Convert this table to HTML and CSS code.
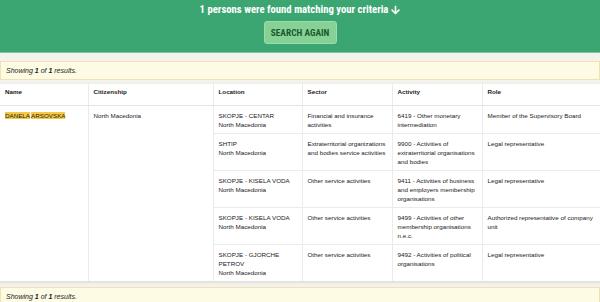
FILE: index.html
```html
<!DOCTYPE html>
<html lang="en">
<head>
<meta charset="utf-8">
<title>Search results</title>
<link rel="stylesheet" href="styles.css">
</head>
<body>
<header class="hero">
  <h1 class="hero-title">1 persons were found matching your criteria <svg class="arrow" viewBox="0 0 448 512" aria-hidden="true"><path d="M413.1 222.5l22.2 22.2c9.4 9.4 9.4 24.6 0 33.9L241 473c-9.4 9.4-24.6 9.4-33.9 0L12.7 278.6c-9.4-9.4-9.4-24.6 0-33.9l22.2-22.2c9.5-9.5 25-9.3 34.3.4L184 343.4V56c0-13.3 10.7-24 24-24h32c13.3 0 24 10.7 24 24v287.4l114.8-120.5c9.3-9.8 24.8-10 34.3-.4z"/></svg></h1>
  <button class="btn-again" type="button">SEARCH AGAIN</button>
</header>
<main class="results">
  <div class="alert">Showing <b>1</b> of <b>1</b> results.</div>
  <table class="grid">
    <colgroup>
      <col class="c-name"><col class="c-cit"><col class="c-loc"><col class="c-sec"><col class="c-act"><col class="c-role">
    </colgroup>
    <thead>
      <tr><th>Name</th><th>Citizenship</th><th>Location</th><th>Sector</th><th>Activity</th><th>Role</th></tr>
    </thead>
    <tbody>
      <tr>
        <td rowspan="5"><mark class="hl">DANELA</mark> <mark class="hl">ARSOVSKA</mark></td>
        <td rowspan="5">North Macedonia</td>
        <td>SKOPJE - CENTAR<br>North Macedonia</td>
        <td>Financial and insurance activities</td>
        <td>6419 - Other monetary intermediation</td>
        <td>Member of the Supervisory Board</td>
      </tr>
      <tr class="sep">
        <td>SHTIP<br>North Macedonia</td>
        <td>Extraterritorial organizations and bodies service activities</td>
        <td>9900 - Activities of extraterritorial organisations and bodies</td>
        <td>Legal representative</td>
      </tr>
      <tr class="sep">
        <td>SKOPJE - KISELA VODA<br>North Macedonia</td>
        <td>Other service activities</td>
        <td>9411 - Activities of business and employers membership organisations</td>
        <td>Legal representative</td>
      </tr>
      <tr class="sep">
        <td>SKOPJE - KISELA VODA<br>North Macedonia</td>
        <td>Other service activities</td>
        <td>9499 - Activities of other membership organisations n.e.c.</td>
        <td>Authorized representative of company unit</td>
      </tr>
      <tr class="sep">
        <td>SKOPJE - GJORCHE PETROV<br>North Macedonia</td>
        <td>Other service activities</td>
        <td>9492 - Activities of political organisations</td>
        <td>Legal representative</td>
      </tr>
    </tbody>
  </table>
  <div class="alert alert-bottom">Showing <b>1</b> of <b>1</b> results.</div>
</main>
</body>
</html>
```
FILE: styles.css
```css
html, body {
  margin: 0;
  padding: 0;
}
body {
  background: #f4f2ed;
  font-family: "Liberation Sans", Arial, sans-serif;
  color: #222;
}
.hero {
  background: #3ca672;
  border-bottom: 1px solid #7cc79e;
  box-sizing: border-box;
  height: 53px;
  display: flex;
  flex-direction: column;
  align-items: center;
  padding-top: 3px;
}
.hero-title {
  margin: 0;
  font-family: "Roboto Condensed", Roboto, sans-serif;
  font-stretch: condensed;
  font-weight: 700;
  font-size: 10.7px;
  line-height: 13px;
  color: #fff;
  display: flex;
  align-items: center;
  gap: 3px;
}
.arrow {
  width: 9px;
  height: 10px;
  fill: #fff;
}
.btn-again {
  margin-top: 5px;
  width: 73px;
  height: 23px;
  padding: 0;
  border: 1px solid #9adda8;
  border-radius: 3px;
  background: #86d196;
  color: #1b5a2e;
  font-family: "Roboto Condensed", Roboto, sans-serif;
  font-stretch: condensed;
  font-weight: 700;
  font-size: 9.4px;
}
.results {
  display: flex;
  flex-direction: column;
}
.alert {
  margin: 8px 0 4px;
  padding: 4px 5px;
  border: 1px solid #efe2b4;
  background: #fefbe5;
  font-size: 7px;
  line-height: 9px;
  font-style: italic;
  color: #222;
}
.alert-bottom {
  margin: 6px 0 0;
}
.grid {
  width: 100%;
  table-layout: fixed;
  border-collapse: collapse;
  background: #fff;
  box-shadow: 0 1px 3px rgba(0, 0, 0, 0.12);
  font-size: 6.25px;
  line-height: 9px;
}
.c-name { width: 88px; }
.c-cit { width: 125px; }
.c-loc { width: 89px; }
.c-sec { width: 90px; }
.c-act { width: 90px; }
.c-role { width: 118px; }
.grid th {
  text-align: left;
  font-weight: 700;
  padding: 3px 5px 9px;
  border-left: 1px solid #ebebeb;
  border-bottom: 1px solid #e3e3e3;
  vertical-align: top;
}
.grid td {
  padding: 5px 5px 4px;
  border-left: 1px solid #ebebeb;
  vertical-align: top;
}
.grid th:first-child,
.grid tbody tr:first-child td:first-child {
  border-left: 0;
}
.grid tr.sep td {
  border-top: 1px solid #ebebeb;
}
.hl {
  background: #f6c843;
  color: #222;
}
```
